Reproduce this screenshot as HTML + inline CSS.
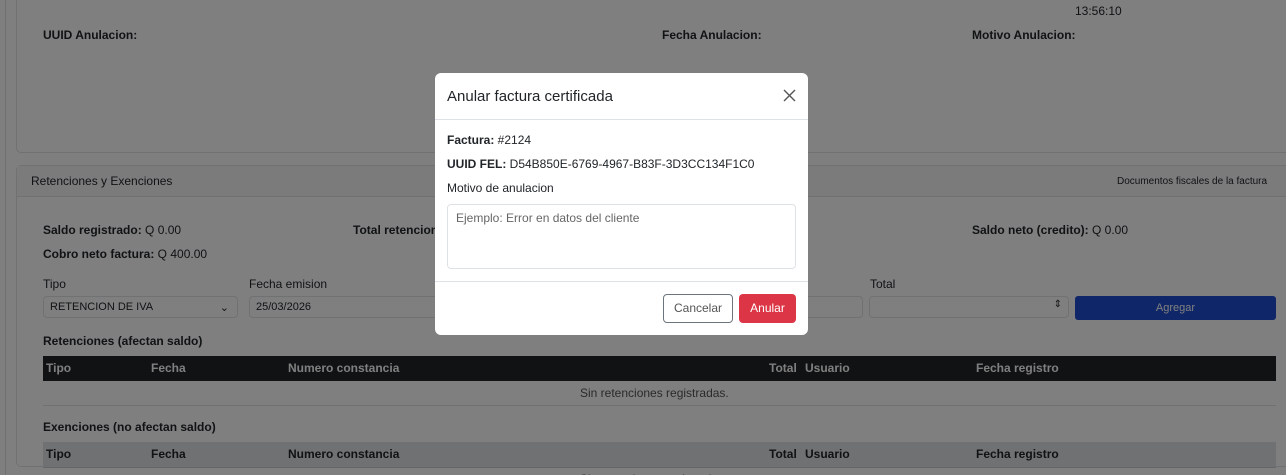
<!DOCTYPE html><html><head><style>
html,body{margin:0;width:1286px;height:475px;overflow:hidden}
body{background:#fff;font-family:"Liberation Sans",sans-serif;font-size:12px;color:#212529;position:relative}
.a{position:absolute}
b{font-weight:bold}
.card{position:absolute;border:1px solid #dee2e6;border-radius:5px}
.inp{position:absolute;height:22px;border:1px solid #dee2e6;border-radius:4px;box-sizing:border-box;font-size:11px;padding:4px 6px;background:#fff}
.th{position:absolute;left:43px;width:1233px;height:25px;font-weight:bold;font-size:12px}
.th span{position:absolute;top:5px}
#ov{position:absolute;left:0;top:0;width:1286px;height:475px;background:rgba(0,0,0,.5)}
.m{position:absolute;left:435px;top:73px;width:373px;height:262px;background:#fff;border-radius:6px;font-size:12px;color:#212529}
</style></head><body>
<div class="a" style="left:5px;top:0;width:1px;height:475px;background:#dee2e6"></div>
<div class="card" style="left:16px;top:-10px;width:1280px;height:161px"></div>
<div class="a" style="left:1075px;top:4px">13:56:10</div>
<div class="a" style="left:43px;top:28px"><b>UUID Anulacion:</b></div>
<div class="a" style="left:662px;top:28px"><b>Fecha Anulacion:</b></div>
<div class="a" style="left:972px;top:28px"><b>Motivo Anulacion:</b></div>
<div class="card" style="left:16px;top:165px;width:1280px;height:300px"></div>
<div class="a" style="left:17px;top:166px;width:1280px;height:30px;background:#f7f7f7;border-bottom:1px solid #dee2e6"></div>
<div class="a" style="left:31px;top:174px">Retenciones y Exenciones</div>
<div class="a" style="left:1117px;top:176px;font-size:10px">Documentos fiscales de la factura</div>
<div class="a" style="left:43px;top:223px"><b>Saldo registrado:</b> Q 0.00</div>
<div class="a" style="left:353px;top:223px"><b>Total retenciones:</b></div>
<div class="a" style="left:972px;top:223px"><b>Saldo neto (credito):</b> Q 0.00</div>
<div class="a" style="left:43px;top:247px"><b>Cobro neto factura:</b> Q 400.00</div>
<div class="a" style="left:43px;top:277px">Tipo</div>
<div class="a" style="left:249px;top:277px">Fecha emision</div>
<div class="a" style="left:870px;top:277px">Total</div>
<div class="inp" style="left:43px;top:296px;width:195px">RETENCION DE IVA<span style="position:absolute;right:8px">⌄</span></div>
<div class="inp" style="left:249px;top:296px;width:200px">25/03/2026</div>
<div class="inp" style="left:700px;top:296px;width:163px"></div>
<div class="inp" style="left:869px;top:296px;width:200px"><span style="position:absolute;right:6px;top:2px;font-size:10px">⇕</span></div>
<div class="a" style="left:1075px;top:296px;width:201px;height:24px;background:#1f4fd0;border-radius:3px;color:#fff;font-size:11px;text-align:center;line-height:24px">Agregar</div>
<div class="a" style="left:43px;top:334px"><b>Retenciones (afectan saldo)</b></div>
<div class="th" style="top:356px;background:#212529;color:#fff"><span style="left:3px">Tipo</span><span style="left:108px">Fecha</span><span style="left:245px">Numero constancia</span><span style="left:726px">Total</span><span style="left:762px">Usuario</span><span style="left:933px">Fecha registro</span></div>
<div class="a" style="left:580px;top:386px;color:#555">Sin retenciones registradas.</div>
<div class="a" style="left:43px;top:405px;width:1233px;height:1px;background:#dee2e6"></div>
<div class="a" style="left:43px;top:420px"><b>Exenciones (no afectan saldo)</b></div>
<div class="th" style="top:442px;background:#dee2e6;border-bottom:1px solid #ccc"><span style="left:3px">Tipo</span><span style="left:108px">Fecha</span><span style="left:245px">Numero constancia</span><span style="left:726px">Total</span><span style="left:762px">Usuario</span><span style="left:933px">Fecha registro</span></div>
<div class="a" style="left:580px;top:472px;color:#555">Sin exenciones registradas.</div>
<div id="ov"></div>
<div class="m">
<div class="a" style="left:12px;top:15px;font-size:15px">Anular factura certificada</div>
<svg class="a" style="left:348px;top:16px" width="13" height="13"><path d="M1 1L12 12M12 1L1 12" stroke="#555" stroke-width="1.4"/></svg>
<div class="a" style="left:0;top:46px;width:373px;height:1px;background:#dee2e6"></div>
<div class="a" style="left:12px;top:60px"><b>Factura:</b> #2124</div>
<div class="a" style="left:12px;top:84px"><b>UUID FEL:</b> D54B850E-6769-4967-B83F-3D3CC134F1C0</div>
<div class="a" style="left:12px;top:108px">Motivo de anulacion</div>
<div class="a" style="left:12px;top:131px;width:349px;height:65px;border:1px solid #dee2e6;border-radius:4px;color:#666;padding:6px 8px;box-sizing:border-box">Ejemplo: Error en datos del cliente</div>
<div class="a" style="left:0;top:208px;width:373px;height:1px;background:#dee2e6"></div>
<div class="a" style="left:228px;top:221px;width:70px;height:29px;border:1px solid #6c757d;border-radius:4px;box-sizing:border-box;text-align:center;line-height:27px;color:#555">Cancelar</div>
<div class="a" style="left:304px;top:221px;width:57px;height:29px;background:#dc3545;border-radius:4px;color:#fff;text-align:center;line-height:29px">Anular</div>
</div>
</body></html>
